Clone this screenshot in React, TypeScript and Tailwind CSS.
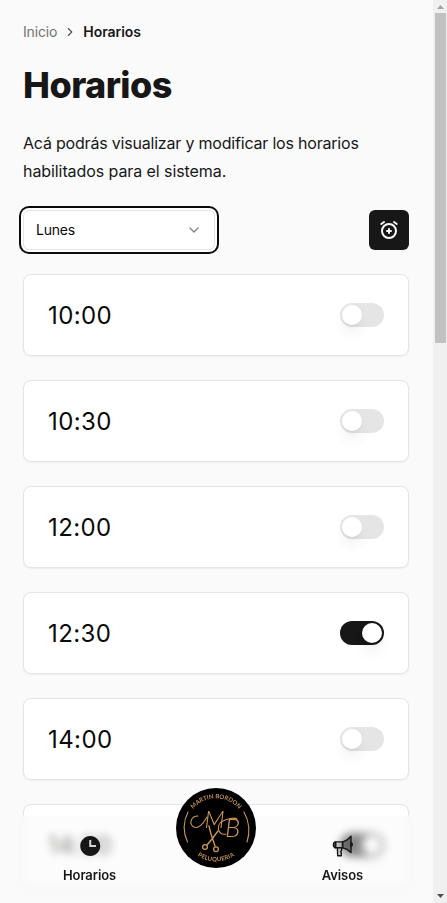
import React from "react";
import { ChevronDown, ChevronRight } from "lucide-react";
import { BiSolidTime } from "react-icons/bi";
import { TbAlarmPlus } from "react-icons/tb";

const slots = [
  { time: "10:00", on: false },
  { time: "10:30", on: false },
  { time: "12:00", on: false },
  { time: "12:30", on: true },
  { time: "14:00", on: false },
  { time: "14:30", on: true },
];

function Toggle({ on }: { on: boolean }) {
  return (
    <button
      role="switch"
      aria-checked={on}
      className={`flex h-6 w-11 shrink-0 items-center rounded-full border-2 border-transparent ${
        on ? "justify-end bg-[#171717]" : "justify-start bg-[#e5e5e5]"
      }`}
    >
      <span className="block size-5 rounded-full bg-white shadow-lg" />
    </button>
  );
}

function SlotCard({ time, on }: { time: string; on: boolean }) {
  return (
    <div className="flex h-[82px] shrink-0 items-center justify-between rounded-lg border border-[#e5e5e5] bg-white px-6 shadow-[0_1px_2px_0_rgba(0,0,0,0.05)]">
      <span className="pt-0.5 text-2xl tracking-[0.4px] text-[#0a0a0a]">{time}</span>
      <Toggle on={on} />
    </div>
  );
}

function Megaphone() {
  return (
    <svg width="24" height="24" viewBox="0 0 24 24" fill="none" stroke="#171717" strokeWidth="1.4" strokeLinejoin="round" strokeLinecap="round">
      <path d="M5.600 7.900h-.6Q3.300 8.300 3.300 10.800t1.700 2.900h.6z" fill="#555" />
      <path d="M5.600 7.900h7v5.800h-7z" fill="#17171722" />
      <path d="M12.600 7.900C16 7.200 18.500 5 21 2.200v16.400C18.500 16 16 14.300 12.600 13.700z" fill="#17171755" />
      <path d="M21.200 8.800q2.300 1.700 0 3.400z" fill="#171717" />
      <path d="M7.400 13.700l.3 8h3.600v-3.200l-.7-.9 1-1.200v-2.700" fill="#17171722" />
    </svg>
  );
}

function Logo() {
  return (
    <svg width="80" height="80" viewBox="0 0 80 80" className="block">
      <defs>
        <path id="top-arc" d="M12.7 28.5A29.6 29.6 0 0 1 67.3 28.5" />
        <path id="bottom-arc" d="M15 62A33.3 33.3 0 0 0 65 62" />
      </defs>
      <circle cx="40" cy="40" r="40" fill="#000" />
      <g fill="#c4935a" fontFamily="Lato, sans-serif" fontSize="6" fontWeight="700">
        <text textAnchor="middle" textLength="52">
          <textPath href="#top-arc" startOffset="50%">MARTIN BORDON</textPath>
        </text>
        <text textAnchor="middle" textLength="39">
          <textPath href="#bottom-arc" startOffset="50%">PELUQUERIA</textPath>
        </text>
      </g>
      <g fill="#d09a55" fontFamily="Lato, sans-serif" fontStyle="italic" fontWeight="300">
        <text x="28.500" y="39.500" fontSize="24">M</text>
        <text x="49" y="49.300" fontSize="26">B</text>
      </g>
      <g fill="none" stroke="#c89555" strokeWidth="1.1" strokeLinecap="round">
        <path d="M12 24Q4.500 39 11.500 54M68 24Q76 39 71 54" />
        <path d="M22 28C15 28 13 35 17 38.500C22 42 27 36 31 29" />
        <path d="M50 46C41 48 40 36 47 33C51 31 58 29 61 31" />
        <path d="M33 38L35 46L39 58M42 43L36 51L31 57" strokeWidth="1.4" />
        <circle cx="29" cy="59" r="2.400" strokeWidth="1.300" />
        <circle cx="40" cy="61.300" r="2.400" strokeWidth="1.300" />
      </g>
    </svg>
  );
}

function Scrollbar() {
  return (
    <div className="flex w-3.5 shrink-0 flex-col items-center justify-between bg-[#f0f0f0]">
      <div className="flex w-full flex-col items-center">
        <div className="flex h-[13px] items-center justify-center">
          <svg width="7" height="4" viewBox="0 0 7 4"><path d="M3.500 0L7 4H0z" fill="#a3a3a3" /></svg>
        </div>
        <div className="ml-px h-[330px] w-[11px] bg-[#c1c1c1]" />
      </div>
      <div className="flex h-[14px] items-center justify-center">
        <svg width="7" height="4" viewBox="0 0 7 4"><path d="M0 0H7L3.500 4z" fill="#505050" /></svg>
      </div>
    </div>
  );
}

export default function App() {
  return (
    <div className="relative flex h-[903px] w-[447px] overflow-hidden bg-[#fafafa] font-['Inter',sans-serif] text-[#0a0a0a]">
      <main className="flex min-w-0 flex-1 flex-col px-6 pt-[22px] pl-[23px]">
        <nav className="flex h-5 items-center gap-1.5 text-sm">
          <span className="tracking-[-0.15px] text-[#737373]">Inicio</span>
          <ChevronRight size={14} className="text-[#525252]" />
          <span className="font-semibold tracking-[-0.05px] text-[#171717]">Horarios</span>
        </nav>
        <h1 className="mt-[23px] text-[36px] leading-10 font-extrabold tracking-[-0.55px] text-[#171717]">Horarios</h1>
        <p className="mt-6 text-base leading-7 text-[#171717]">
          <span className="tracking-[-0.2px]">Acá podrás visualizar y modificar los horarios</span>
          <br />
          <span className="tracking-[-0.08px]">habilitados para el sistema.</span>
        </p>
        <div className="mt-[25px] flex h-10 shrink-0 items-center justify-between">
          <button className="flex h-10 w-48 items-center justify-between rounded-md border border-[#e5e5e5] bg-white px-3 text-sm ring-2 ring-[#0a0a0a] ring-offset-2">
            <span className="tracking-[-0.2px]">Lunes</span>
            <ChevronDown size={16} className="opacity-50" />
          </button>
          <button className="flex size-10 items-center justify-center rounded-md bg-[#171717] text-[#fafafa]">
            <TbAlarmPlus size={24} />
          </button>
        </div>
        <section className="mt-6 flex flex-col gap-6">
          {slots.map((slot) => (
            <SlotCard key={slot.time} {...slot} />
          ))}
        </section>
      </main>
      <Scrollbar />
      <footer className="absolute bottom-0 left-0 h-[87px] w-[433px]">
        <div className="absolute inset-0 bg-[#fafafa]/50 backdrop-blur-[4px]" />
        <div className="relative flex h-full justify-between pr-[70px] pl-[63px] text-[13px] leading-5 font-semibold text-[#171717]">
          <div className="flex flex-col items-center pt-[18px]">
            <BiSolidTime size={24} />
            <span className="mt-[7px] tracking-[-0.1px]">Horarios</span>
          </div>
          <div className="flex flex-col items-center pt-[18px]">
            <Megaphone />
            <span className="mt-[7px] tracking-[-0.1px]">Avisos</span>
          </div>
        </div>
        <div className="absolute -top-7 left-[176px]">
          <Logo />
        </div>
      </footer>
    </div>
  );
}
